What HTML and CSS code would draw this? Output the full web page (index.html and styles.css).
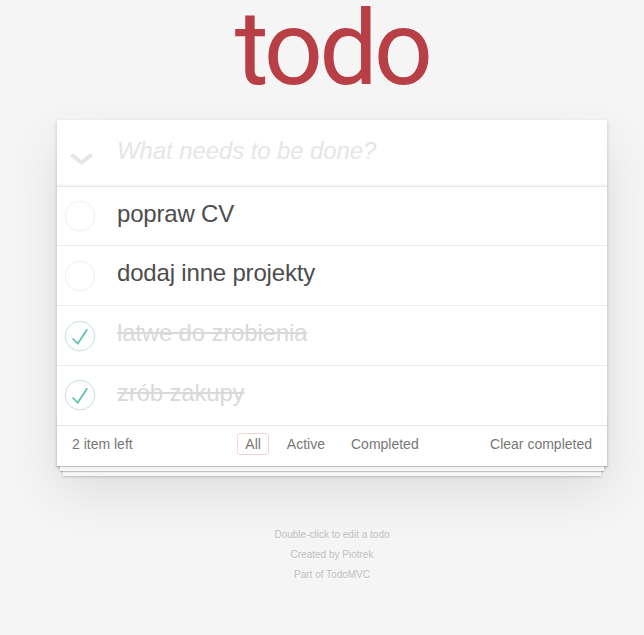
FILE: index.html
```html
<!DOCTYPE html>
<html lang="pl">
<head>
<meta charset="utf-8">
<title>todo</title>
<link rel="stylesheet" href="styles.css">
</head>
<body>
<div class="page">
  <h1 class="title">todo</h1>
  <section class="todoapp">
    <header class="header">
      <span class="toggle-all">
        <svg width="23" height="12" viewBox="0 0 23 12"><polygon points="0,3.2 3,0.2 11.5,7.3 20,0.2 23,3.2 11.5,12" fill="#e6e6e6"/></svg>
      </span>
      <div class="new-todo">What needs to be done?</div>
    </header>
    <ul class="todo-list">
      <li class="item">
        <span class="toggle"><svg width="40" height="40" viewBox="-10 -18 100 135"><circle cx="50" cy="50" r="50" fill="none" stroke="#ededed" stroke-width="3"/></svg></span>
        <span class="label">popraw CV</span>
      </li>
      <li class="item">
        <span class="toggle"><svg width="40" height="40" viewBox="-10 -18 100 135"><circle cx="50" cy="50" r="50" fill="none" stroke="#ededed" stroke-width="3"/></svg></span>
        <span class="label">dodaj inne projekty</span>
      </li>
      <li class="item completed">
        <span class="toggle"><svg width="40" height="40" viewBox="-10 -18 100 135"><circle cx="50" cy="50" r="50" fill="none" stroke="#bddad5" stroke-width="3"/><path fill="#5dc2af" d="M72 25L42 71 27 56l-4 4 20 20 34-52z"/></svg></span>
        <span class="label">latwe do zrobienia</span>
      </li>
      <li class="item completed">
        <span class="toggle"><svg width="40" height="40" viewBox="-10 -18 100 135"><circle cx="50" cy="50" r="50" fill="none" stroke="#bddad5" stroke-width="3"/><path fill="#5dc2af" d="M72 25L42 71 27 56l-4 4 20 20 34-52z"/></svg></span>
        <span class="label">zrób zakupy</span>
      </li>
    </ul>
    <footer class="footer">
      <span class="todo-count">2 item left</span>
      <ul class="filters">
        <li><a class="filter selected">All</a></li>
        <li><a class="filter">Active</a></li>
        <li><a class="filter">Completed</a></li>
      </ul>
      <span class="clear-completed">Clear completed</span>
    </footer>
  </section>
  <footer class="info">
    <p>Double-click to edit a todo</p>
    <p>Created by Piotrek</p>
    <p>Part of TodoMVC</p>
  </footer>
</div>
</body>
</html>
```

FILE: styles.css
```css
html, body {
  margin: 0;
  padding: 0;
}

body {
  background: #f5f5f5;
  color: #4d4d4d;
  font: 14px/1.4em "Liberation Sans", Arial, sans-serif;
  -webkit-font-smoothing: antialiased;
}

.page {
  padding-left: 20px;
}

.title {
  margin: 0 0 22px 0;
  text-align: center;
  font-family: Roboto, "Open Sans", sans-serif;
  font-weight: 400;
  font-size: 104px;
  line-height: 98px;
  letter-spacing: -4px;
  color: #b83f45;
}

.todoapp {
  width: 550px;
  margin: 0 auto;
  background: #fff;
  position: relative;
  box-shadow: 0 2px 4px 0 rgba(0, 0, 0, 0.2), 0 25px 50px 0 rgba(0, 0, 0, 0.1);
}

.header {
  display: flex;
  align-items: center;
  height: 65.6px;
  box-shadow: inset 0 -2px 1px rgba(0, 0, 0, 0.03);
  border-bottom: 1px solid #e6e6e6;
}

.toggle-all {
  width: 60px;
  display: flex;
  justify-content: center;
  padding-top: 12px;
  margin-left: -6px;
  margin-right: 6px;
}

.toggle-all svg {
  display: block;
}

.new-todo {
  font-size: 24px;
  font-style: italic;
  font-weight: 300;
  line-height: 1.4em;
  letter-spacing: -0.1px;
  color: #e6e6e6;
  padding: 0 16px 4px 0;
}

.todo-list {
  margin: 0;
  padding: 0;
  list-style: none;
}

.item {
  display: flex;
  align-items: center;
  height: 58.8px;
  border-bottom: 1px solid #ededed;
}

.item:last-child {
  border-bottom: none;
}

.toggle {
  width: 60px;
  display: flex;
}

.toggle svg {
  display: block;
}

.label {
  font-size: 24px;
  line-height: 1.2;
  letter-spacing: -0.18px;
  color: #4d4d4d;
  padding: 0 15px 4px 0;
}

.completed .label {
  color: #d9d9d9;
  text-decoration: line-through;
}

.footer {
  position: relative;
  display: grid;
  grid-template-columns: 1fr auto 1fr;
  grid-template-rows: 20px;
  align-items: center;
  height: 20px;
  padding: 8px 15px 12px;
  border-top: 1px solid #e6e6e6;
  color: #777;
}

.footer::before {
  content: '';
  position: absolute;
  right: 0;
  bottom: 0;
  left: 0;
  height: 50px;
  overflow: hidden;
  box-shadow: 0 1px 1px rgba(0, 0, 0, 0.2),
              0 8px 0 -3px #f6f6f6,
              0 9px 1px -3px rgba(0, 0, 0, 0.2),
              0 16px 0 -6px #f6f6f6,
              0 17px 2px -6px rgba(0, 0, 0, 0.2);
  pointer-events: none;
}

.todo-count {
  line-height: 20px;
  position: relative;
}

.filters {
  display: flex;
  gap: 10px;
  margin: 0;
  padding: 0;
  list-style: none;
  position: relative;
}

.filter {
  display: block;
  line-height: 14px;
  padding: 3px 7px;
  border: 1px solid transparent;
  border-radius: 3px;
  color: inherit;
}

.filter.selected {
  border-color: rgba(175, 47, 47, 0.2);
}

.clear-completed {
  justify-self: end;
  line-height: 20px;
  position: relative;
}

.info {
  margin: 64px auto 0;
  color: #bfbfbf;
  font-size: 10px;
  text-shadow: 0 1px 0 rgba(255, 255, 255, 0.5);
  text-align: center;
}

.info p {
  line-height: 1;
  margin: 10px 0;
}
```
